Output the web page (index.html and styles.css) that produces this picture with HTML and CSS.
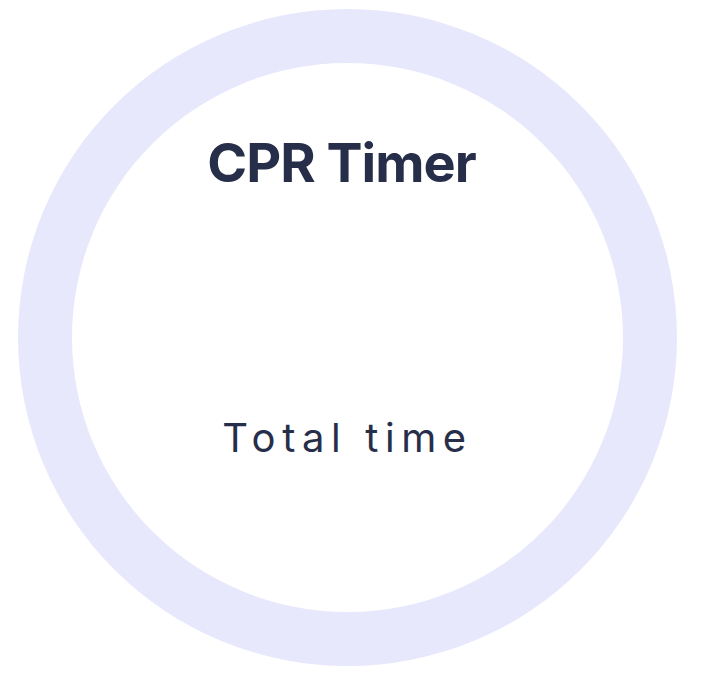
FILE: index.html
```html
<!DOCTYPE html>
<html>
<head>
<meta charset="utf-8">
<link rel="stylesheet" href="styles.css">
</head>
<body>
<main class="page">
  <div class="ring">
    <h1 class="title">CPR Timer</h1>
    <p class="label">Total time</p>
  </div>
</main>
</body>
</html>
```
FILE: styles.css
```css
html, body {
  margin: 0;
  padding: 0;
  background: #ffffff;
}
.page {
  width: 705px;
  height: 681px;
  padding: 9px 0 0 18px;
  box-sizing: border-box;
}
.ring {
  width: 659px;
  height: 657px;
  box-sizing: border-box;
  border: 54px solid #e8e8fd;
  border-radius: 50%;
  display: flex;
  flex-direction: column;
  align-items: center;
  font-family: Inter, "Noto Sans", sans-serif;
  color: #272e4a;
}
.title {
  margin: 66px 12px 0 0;
  font-size: 54px;
  line-height: 68px;
  font-weight: 650;
  letter-spacing: -1px;
}
.label {
  margin: 216px 0 0 0;
  font-size: 40px;
  line-height: 50px;
  font-weight: 400;
  letter-spacing: 6.6px;
}
```
